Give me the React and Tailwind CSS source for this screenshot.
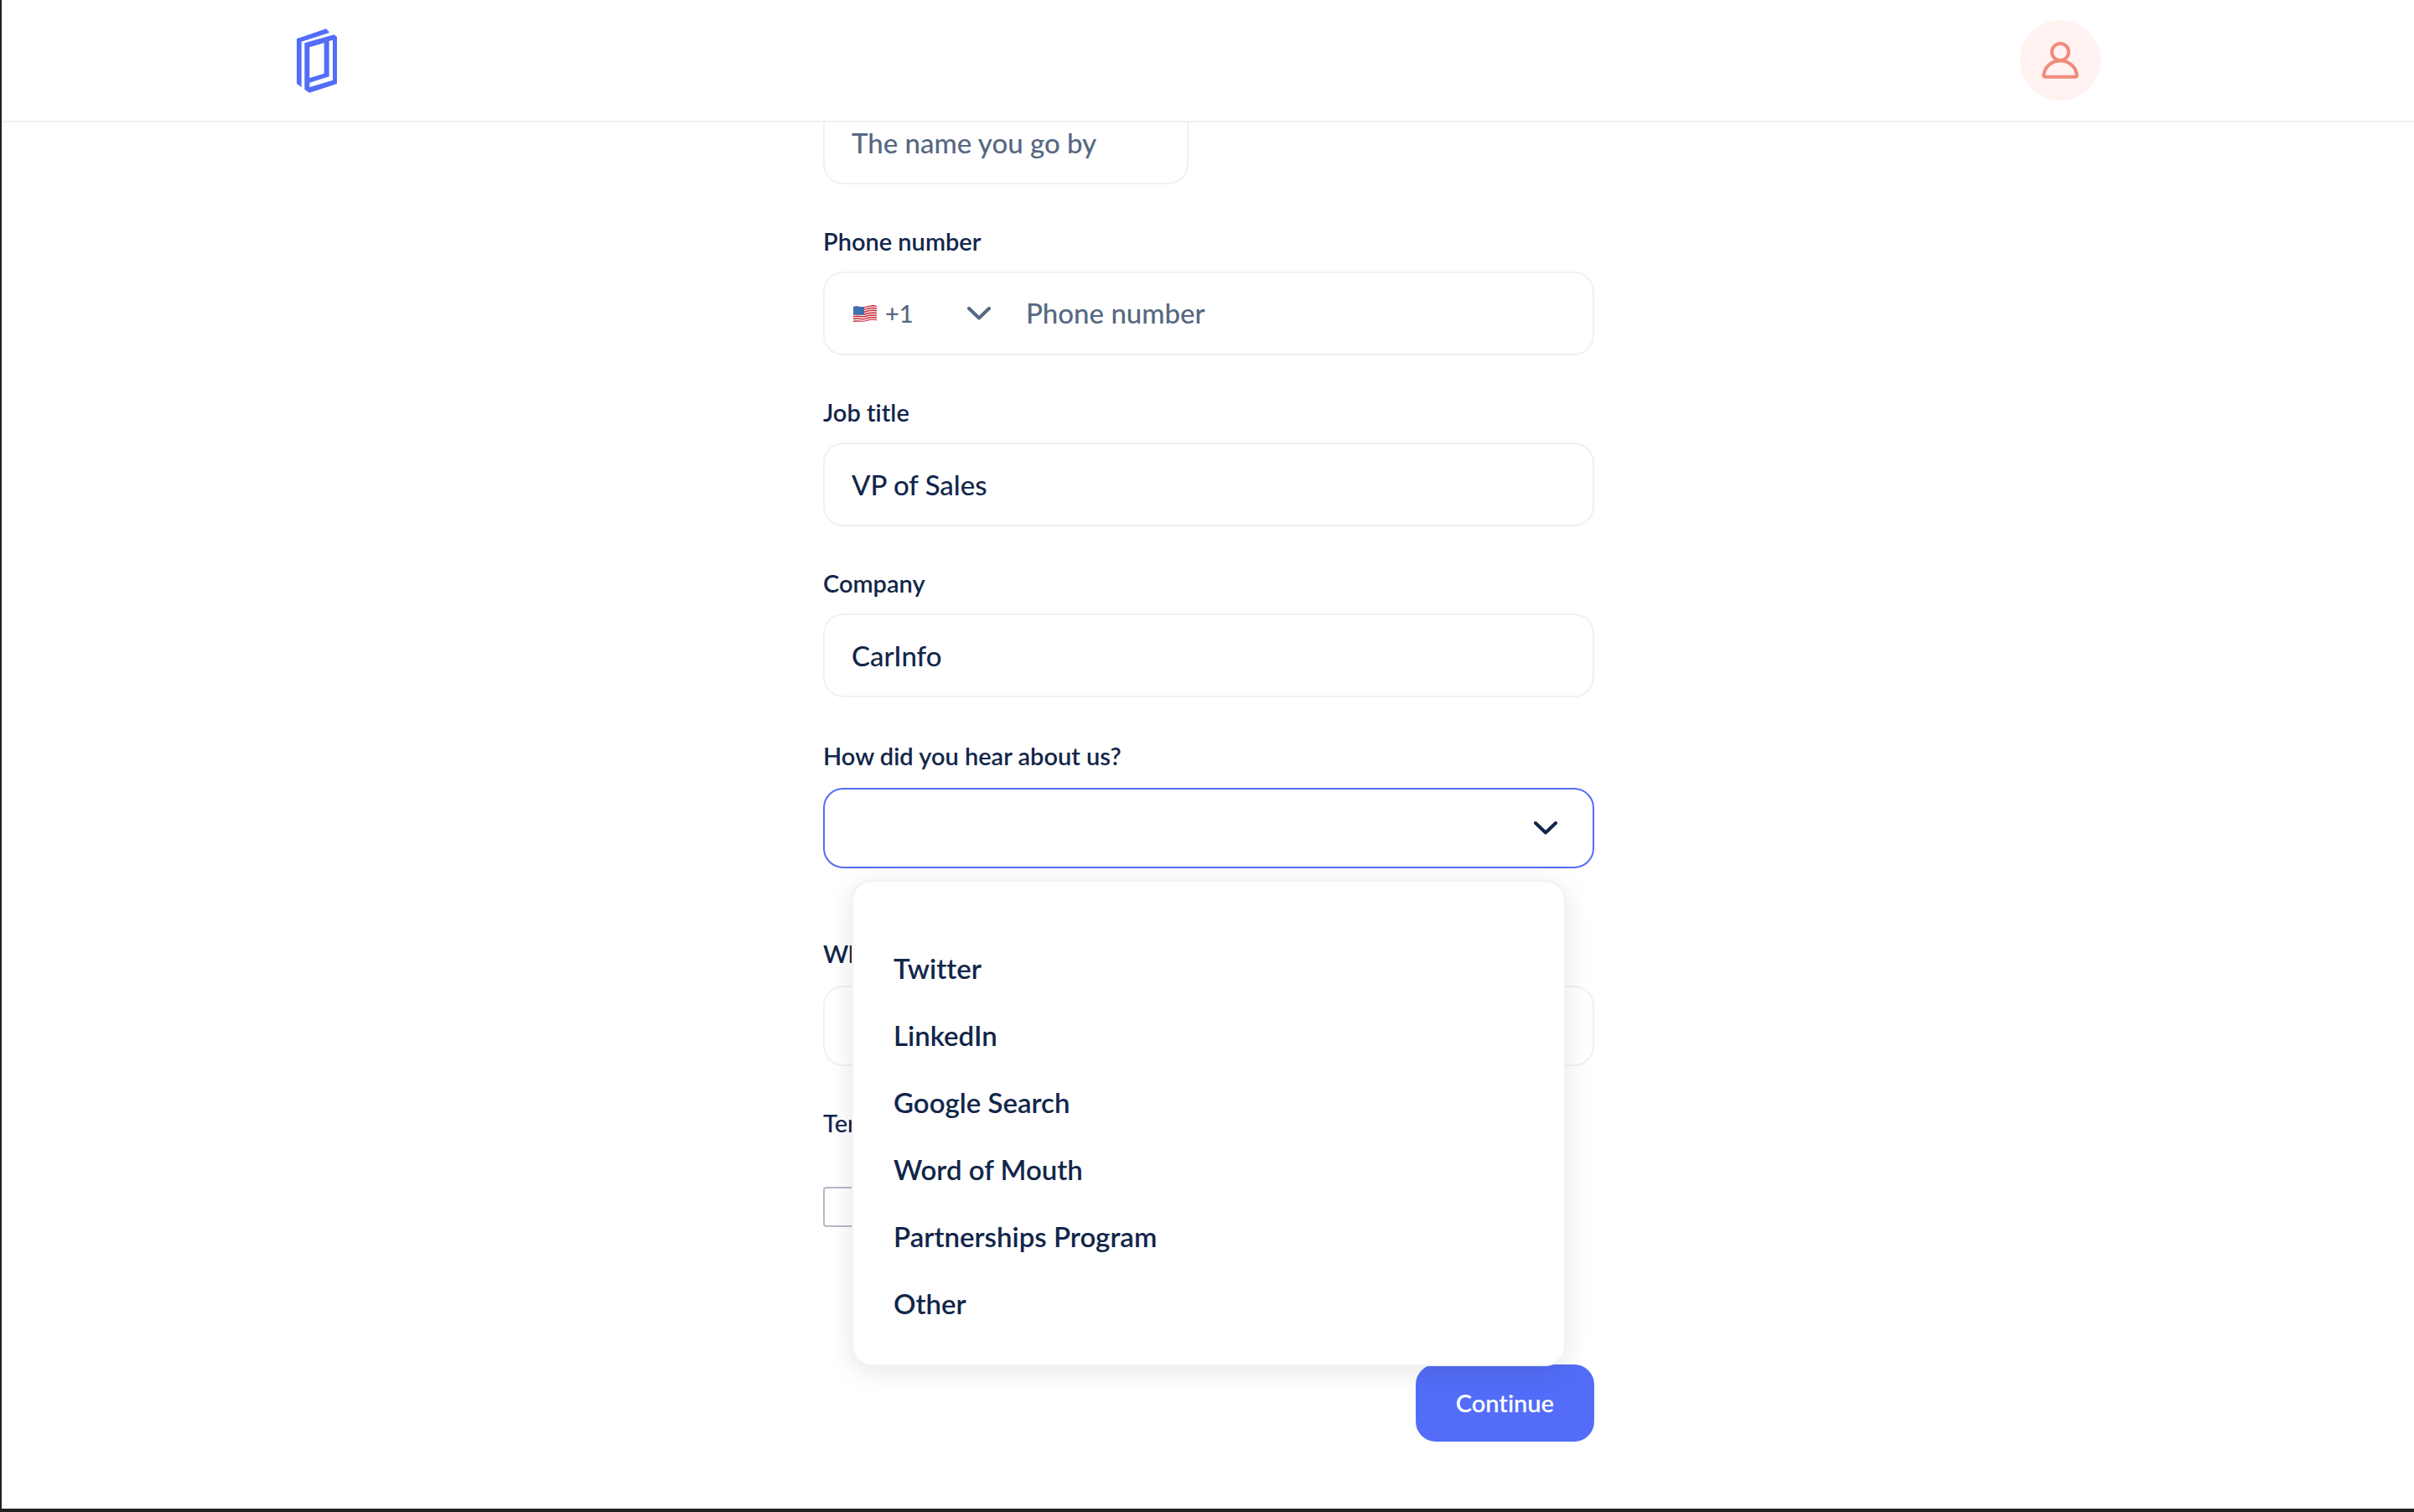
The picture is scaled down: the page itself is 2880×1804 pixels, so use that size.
const SOURCES = ['Twitter', 'LinkedIn', 'Google Search', 'Word of Mouth', 'Partnerships Program', 'Other'];

const LABEL = 'mb-4 block text-[29px] leading-10 font-semibold';
const SELECT_LABEL = 'mb-5 block text-[29px] leading-9 font-semibold';
const BOX = 'w-full rounded-3xl border-2 border-[#f0f1f3] bg-white outline-none';
const TEXT_INPUT = 'h-25 px-8 text-[33px] font-medium text-[#12264a] placeholder:text-[#566882] placeholder:opacity-100';

function Logo() {
  return (
    <svg viewBox="42 40 144 231" className="h-[77px] w-12" fill="#536df8" aria-hidden="true">
      <path d="M42 77 147 41 158 52 157 56 59 87V250L42 237Z" />
      <path
        fillRule="evenodd"
        d="M70 92 176 62 186 70V238L87 270 70 258ZM88 107V217L140 201V92ZM158 85V212L88 234V250L171 225V81Z"
      />
    </svg>
  );
}

function PersonIcon() {
  return (
    <svg viewBox="0 0 48 48" className="size-12" fill="none" stroke="#f08a7c" strokeWidth="4" strokeLinejoin="round" aria-hidden="true">
      <circle cx="24" cy="14" r="10" />
      <path d="M4.2 41.4C5.6 31.8 13.5 24.4 24 24.4S42.4 31.8 43.8 41.4C44 42.8 43.4 43.7 42.2 43.7H5.8C4.6 43.7 4 42.8 4.2 41.4Z" />
    </svg>
  );
}

function Chevron({ className }) {
  return (
    <svg viewBox="0 0 28 16" className={className} fill="none" stroke="currentColor" strokeWidth="4" strokeLinecap="round" strokeLinejoin="round" aria-hidden="true">
      <path d="M2 2 14 13.5 26 2" />
    </svg>
  );
}

function Flag() {
  return (
    <svg viewBox="0 0 28 21" className="h-[21px] w-7 shrink-0" aria-hidden="true">
      <clipPath id="flag-shape">
        <path d="M0 2C6 0 9 3.5 15 1.5S24-.3 28 .6V18.5C23 17.2 20 18 15 19.3S6 18.8 0 20.6Z" />
      </clipPath>
      <g clipPath="url(#flag-shape)">
        <rect width="28" height="21" fill="#f4f1f2" />
        <g fill="none" stroke="#cf2b3c" strokeWidth="1.5">
          <path d="M0 2.6C6 .8 9 4 15 2.1S24 .4 28 1.2" />
          <path d="M0 5.4C6 3.6 9 6.8 15 4.9S24 3.2 28 4" />
          <path d="M0 8.2C6 6.4 9 9.6 15 7.7S24 6 28 6.8" />
          <path d="M0 11C6 9.2 9 12.4 15 10.5S24 8.8 28 9.6" />
          <path d="M0 13.8C6 12 9 15.2 15 13.3S24 11.6 28 12.4" />
          <path d="M0 16.6C6 14.8 9 18 15 16.1S24 14.4 28 15.2" />
          <path d="M0 19.6C6 17.8 9 20.8 15 18.9S24 17.2 28 18" />
        </g>
        <path d="M0 1C5 .5 9 3 13 2V11.5C9 12.5 5 10.6 0 12Z" fill="#3f71ad" />
      </g>
    </svg>
  );
}

function TextField({ id, label, value }) {
  return (
    <div>
      <label htmlFor={id} className={LABEL}>{label}</label>
      <input id={id} type="text" defaultValue={value} className={`${BOX} ${TEXT_INPUT}`} />
    </div>
  );
}

export default function App() {
  return (
    <div className="flex min-h-screen flex-col border-b-4 border-l-2 border-[#212124] bg-white font-['Lato',sans-serif] text-[#12264a] [font-variant-ligatures:none]">
      <header className="relative z-10 flex items-center justify-between border-b-2 border-[#f1f2f3] bg-white py-6 pr-[374px] pl-[352px]">
        <a href="#home" aria-label="Home"><Logo /></a>
        <button type="button" aria-label="Account" className="flex size-24 items-center justify-center rounded-full bg-[#fff2f0]">
          <PersonIcon />
        </button>
      </header>

      <main className="-mt-6.5 pl-0.5">
        <form className="mx-auto flex w-full max-w-[920px] flex-col gap-12">
          <div className="grid grid-cols-2 gap-12">
            <input type="text" aria-label="Preferred name" placeholder="The name you go by" className={`${BOX} ${TEXT_INPUT}`} />
          </div>

          <div>
            <label htmlFor="phone" className={LABEL}>Phone number</label>
            <div className={`${BOX} flex h-25 items-center pl-[34px] text-[#566882]`}>
              <Flag />
              <div className="relative ml-2.5 flex w-[140px] items-center">
                <select aria-label="Country code" className="w-full appearance-none bg-transparent text-[29px] font-medium outline-none">
                  <option>+1</option>
                </select>
                <Chevron className="pointer-events-none absolute right-3.5 h-4 w-7" />
              </div>
              <input id="phone" type="tel" placeholder="Phone number" className="ml-7 min-w-0 flex-1 bg-transparent text-[33px] font-medium outline-none placeholder:text-[#566882] placeholder:opacity-100" />
            </div>
          </div>

          <TextField id="job" label="Job title" value="VP of Sales" />
          <TextField id="company" label="Company" value="CarInfo" />

          <div className="relative mt-1 mb-9">
            <label htmlFor="source" className={SELECT_LABEL}>How did you hear about us?</label>
            <div className="relative flex items-center">
              <select id="source" defaultValue="" className="h-24 w-full appearance-none rounded-3xl border-2 border-[#536df8] bg-white px-8 text-[33px] outline-none">
                <option value=""></option>
              </select>
              <Chevron className="pointer-events-none absolute right-11 h-4 w-7" />
            </div>
            <ul role="listbox" aria-label="Sources" className="absolute inset-x-[34px] top-full z-10 mt-3.5 rounded-3xl border-2 border-[#f1f2f4] bg-white py-8 text-[33px] font-semibold shadow-[0_6px_32px_rgba(0,0,0,0.1)]">
              <li role="option" aria-selected="true" aria-label="None" className="h-8" />
              {SOURCES.map((name) => (
                <li key={name} role="option" aria-selected="false" className="flex h-20 items-center px-12">{name}</li>
              ))}
            </ul>
          </div>

          <div>
            <label htmlFor="goal" className={SELECT_LABEL}>Wh</label>
            <input id="goal" type="text" className={`${BOX} h-24 px-8 text-[33px]`} />
          </div>

          <div>
            <label htmlFor="terms" className="mb-14 block text-[29px] leading-10 font-medium">Ter</label>
            <input id="terms" type="checkbox" className="block size-12 appearance-none rounded-sm border-2 border-[#b4bac6] bg-white" />
          </div>

          <button type="submit" className="mt-29 flex h-23 items-center self-end rounded-3xl bg-[#536df8] px-12 text-[29px] font-semibold text-white">
            Continue
          </button>
        </form>
      </main>
    </div>
  );
}
